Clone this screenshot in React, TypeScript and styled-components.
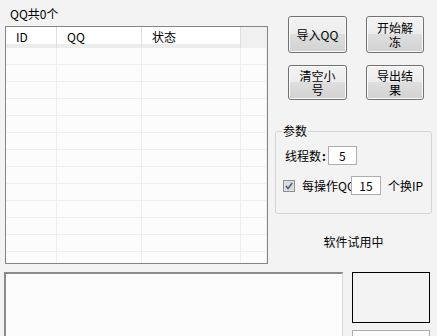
import styled, { createGlobalStyle } from "styled-components";

const GlobalStyle = createGlobalStyle`
  html, body {
    margin: 0;
    padding: 0;
    background: #f3f3f3;
  }
  * {
    box-sizing: border-box;
  }
`;

const Page = styled.div`
  width: 437px;
  height: 336px;
  overflow: hidden;
  background: #f3f3f3;
  color: #000;
  font-family: "Noto Sans CJK SC", "Liberation Sans", sans-serif;
  font-size: 12px;
`;

const TopRow = styled.div`
  display: flex;
  height: 272px;
`;

const LeftPane = styled.div`
  width: 270px;
  padding: 7px 0 0 5px;
  display: flex;
  flex-direction: column;
  gap: 5px;
`;

const Caption = styled.div`
  height: 14px;
  line-height: 14px;
  margin-left: 5px;
`;

const ListView = styled.div`
  width: 263px;
  height: 238px;
  border: 1px solid #858585;
  background: #fcfcfc;
  overflow: hidden;
`;

const columns = "51px 85px 99px 1fr";

const HeaderRow = styled.div`
  display: grid;
  grid-template-columns: ${columns};
  height: 21px;
`;

const HeaderCell = styled.div<{ $filler?: boolean }>`
  padding-left: ${({ $filler }) => ($filler ? 0 : 10)}px;
  line-height: 19px;
  background: ${({ $filler }) =>
    $filler ? "#f0f0f0" : "linear-gradient(#ffffff 0%, #ffffff 82%, #ececec 82%, #ececec 100%)"};
  border-right: ${({ $filler }) => ($filler ? "none" : "1px solid #dedede")};
`;

const BodyRow = styled.div`
  display: grid;
  grid-template-columns: ${columns};
  height: 17px;
  border-bottom: 1px solid #efefef;
`;

const BodyCell = styled.div`
  border-right: 1px solid #efefef;
`;

const RightPane = styled.div`
  padding-left: 5px;
  width: 162px;
  display: flex;
  flex-direction: column;
`;

const ButtonGrid = styled.div`
  display: grid;
  grid-template-columns: 59px 58px;
  grid-template-rows: 37px 35px;
  column-gap: 19px;
  row-gap: 12px;
  padding: 16px 0 0 13px;
`;

const Button = styled.button`
  font: inherit;
  color: #000;
  border: 1px solid #707070;
  border-radius: 3px;
  padding: 0 7px;
  line-height: 14px;
  background: linear-gradient(#f3f3f3 0%, #ececec 50%, #dedede 50%, #d2d2d2 100%);
  box-shadow: inset 0 0 0 1px #fcfcfc;
`;

const GroupBox = styled.fieldset`
  margin: 24px 0 0 0;
  width: 157px;
  height: 90px;
  border: 1px solid #d5d5d5;
  border-radius: 3px;
  padding: 8px 0 0 9px;
  display: flex;
  flex-direction: column;
  gap: 11px;
`;

const Legend = styled.legend`
  padding: 0 1px;
  margin-left: -3px;
  line-height: 14px;
`;

const FieldRow = styled.div`
  display: flex;
  align-items: center;
  height: 19px;
`;

const FieldLabel = styled.span<{ $width?: number }>`
  ${({ $width }) => ($width ? `width: ${$width}px; overflow: hidden;` : "")}
  white-space: nowrap;
  line-height: 19px;
`;

const Colon = styled.b`
  margin: 0 2px 0 1px;
`;

const NumberBox = styled.div<{ $width: number }>`
  width: ${({ $width }) => $width}px;
  height: 19px;
  line-height: 17px;
  border: 1px solid #abadb3;
  background: #fff;
  text-align: center;
`;

const CheckBox = styled.span`
  width: 12px;
  height: 12px;
  margin: 0 7px 0 -2px;
  display: inline-flex;
`;

const Suffix = styled.span`
  margin-left: 7px;
`;

const TrialText = styled.div`
  margin-top: 21px;
  width: 157px;
  text-align: center;
  line-height: 14px;
`;

const BottomRow = styled.div`
  display: flex;
  padding-left: 4px;
  gap: 9px;
`;

const LogBox = styled.div`
  width: 339px;
  height: 80px;
  background: #fcfcfc;
  border-top: 2px solid #8a8a8a;
  border-left: 2px solid #8a8a8a;
  border-right: 1px solid #dadada;
`;

const SideColumn = styled.div`
  display: flex;
  flex-direction: column;
  gap: 7px;
`;

const CodeBox = styled.div`
  width: 78px;
  height: 51px;
  border: 1px solid #000;
  background: #f3f3f3;
`;

const SmallBox = styled.div`
  width: 78px;
  height: 30px;
  border: 1px solid #adadad;
  background: #fcfcfc;
`;

const CheckIcon = () => (
  <svg width="12" height="12" viewBox="0 0 12 12">
    <rect x="0.5" y="0.5" width="11" height="11" fill="#e6e6e6" stroke="#8f8f8f" />
    <rect x="1.5" y="1.5" width="9" height="9" fill="#dcdcdc" />
    <path d="M2.8 6 L5 8.4 L9.3 3" fill="none" stroke="#4a6190" strokeWidth="1.6" />
  </svg>
);

const rows = Array.from({ length: 13 }, (_, i) => i);

const App = () => {
  return (
    <Page>
      <GlobalStyle />
      <TopRow>
        <LeftPane>
          <Caption>QQ共0个</Caption>
          <ListView>
            <HeaderRow>
              <HeaderCell>ID</HeaderCell>
              <HeaderCell>QQ</HeaderCell>
              <HeaderCell>状态</HeaderCell>
              <HeaderCell $filler />
            </HeaderRow>
            {rows.map((r) => (
              <BodyRow key={r}>
                <BodyCell />
                <BodyCell />
                <BodyCell />
                <BodyCell />
              </BodyRow>
            ))}
          </ListView>
        </LeftPane>
        <RightPane>
          <ButtonGrid>
            <Button>导入QQ</Button>
            <Button>开始解冻</Button>
            <Button>清空小号</Button>
            <Button>导出结果</Button>
          </ButtonGrid>
          <GroupBox>
            <Legend>参数</Legend>
            <FieldRow>
              <FieldLabel>线程数</FieldLabel>
              <Colon>:</Colon>
              <NumberBox $width={29}>5</NumberBox>
            </FieldRow>
            <FieldRow>
              <CheckBox>
                <CheckIcon />
              </CheckBox>
              <FieldLabel $width={49}>每操作QQ</FieldLabel>
              <NumberBox $width={30}>15</NumberBox>
              <Suffix>个换IP</Suffix>
            </FieldRow>
          </GroupBox>
          <TrialText>软件试用中</TrialText>
        </RightPane>
      </TopRow>
      <BottomRow>
        <LogBox />
        <SideColumn>
          <CodeBox />
          <SmallBox />
        </SideColumn>
      </BottomRow>
    </Page>
  );
};

export default App;
